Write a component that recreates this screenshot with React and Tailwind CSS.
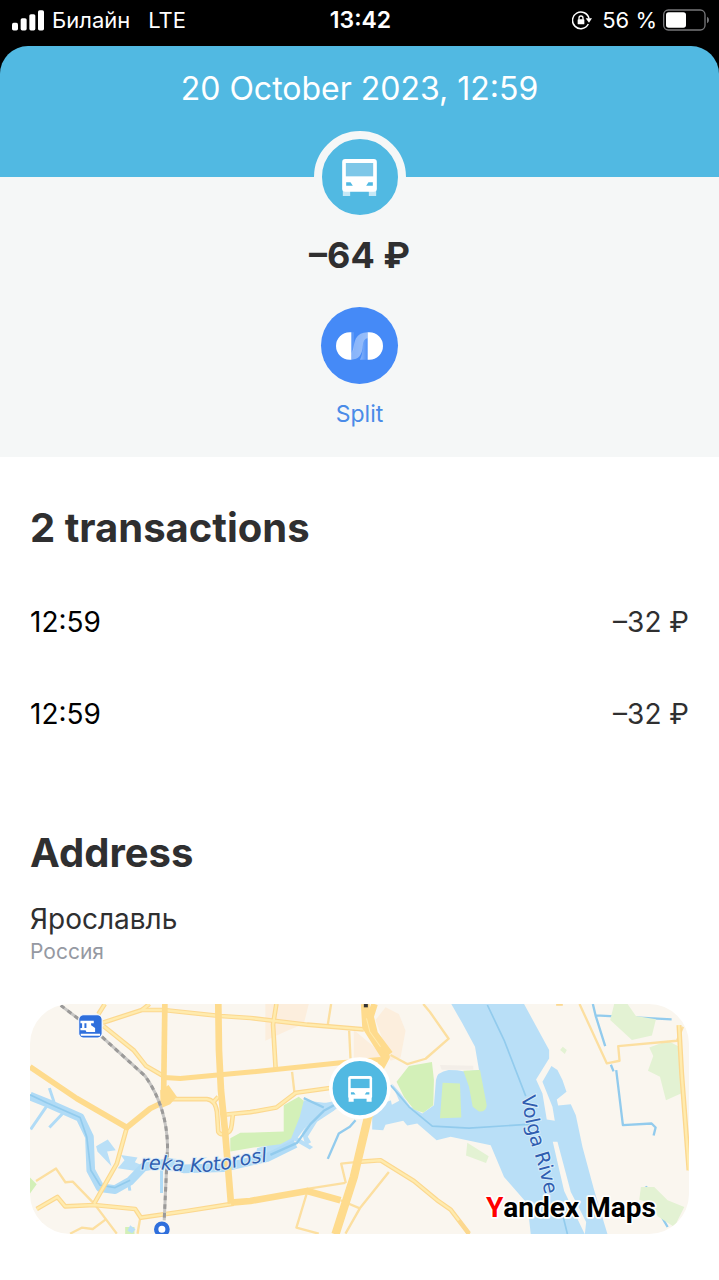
import React from 'react';

const TRANSACTIONS = [
  { id: 1, time: "12:59", amount: "–32 ₽" },
  { id: 2, time: "12:59", amount: "–32 ₽" }
];

function BusShape({ glass, lamps, wheels }) {
  return (
    <>
      <path d="M2 92h22v19H2zM80 92h22v19H80z" fill={wheels} />
      <rect width="104" height="98" rx="9" fill="#fff" />
      <rect x="11" y="12" width="82" height="40" fill={glass} />
      <path d="M12 70h13l7 10H12zM92 70H79l-7 10h20z" fill={lamps} />
    </>
  );
}

function StatusBar() {
  return (
    <div className="grid h-[46px] grid-cols-[1fr_auto_1fr] items-center bg-black pb-1.5 pl-3 pr-2.5 text-[22px] leading-7 text-white">
      <div className="flex items-center">
        <svg className="mr-2 h-[21px] w-8" viewBox="0 0 96 62" fill="#fff">
          <rect x="0" y="38" width="18" height="23" rx="5" />
          <rect x="26" y="24" width="18" height="37" rx="5" />
          <rect x="52" y="12" width="18" height="49" rx="5" />
          <rect x="78" y="0" width="18" height="61" rx="5" />
        </svg>
        <span>Билайн</span>
        <span className="ml-[18px]">LTE</span>
      </div>
      <span className="text-[23px] font-semibold">13:42</span>
      <div className="flex items-center justify-end">
        <svg className="mr-2.5 h-5 w-5" viewBox="0 0 60 60" fill="none">
          <path d="M49 42A25 25 0 1 1 51 26" stroke="#fff" strokeWidth="4.5" />
          <path d="M41 25h19l-9 13z" fill="#fff" />
          <rect x="17" y="28" width="20" height="15" rx="2" fill="#fff" />
          <path d="M21 29v-5a6 6 0 0 1 12 0v5" stroke="#fff" strokeWidth="4" />
        </svg>
        <span>56 %</span>
        <svg className="ml-1.5 h-[22px] w-[46px]" viewBox="0 0 138 66">
          <rect x="2" y="3" width="124" height="60" rx="14" fill="none" stroke="#77777a" strokeWidth="4" />
          <rect x="9" y="10" width="60" height="46" rx="8" fill="#fff" />
          <path d="M132 23q6 3 6 10t-6 10z" fill="#77777a" />
        </svg>
      </div>
    </div>
  );
}

function SplitLogo() {
  return (
    <svg className="h-7 w-[47px]" viewBox="0 0 141 82">
      <defs>
        <linearGradient id="fadeLeft" x1="0" x2="1">
          <stop offset="0" stopColor="#fff" stopOpacity="0.35" />
          <stop offset="1" stopColor="#fff" stopOpacity="0.45" />
        </linearGradient>
        <linearGradient id="fadeRight" x1="0" x2="1">
          <stop offset="0" stopColor="#fff" stopOpacity="0.35" />
          <stop offset="1" stopColor="#fff" stopOpacity="0.05" />
        </linearGradient>
      </defs>
      <path d="M46 0H41a41 41 0 0 0 0 82h5zM95 0h5a41 41 0 0 1 0 82h-5z" fill="#fff" />
      <path d="M46 0h8v52l-8 10z" fill="#fff" opacity="0.12" />
      <path d="M46 82V62C54 52 52 34 60 18Q70 0 95 0v18Q82 18 80 42 78 82 46 82z" fill="url(#fadeLeft)" />
      <path d="M80 42Q82 18 95 18v64H72Q80 66 80 42z" fill="url(#fadeRight)" />
    </svg>
  );
}

// minor streets, drawn as a casing with a lighter core
const STREETS = [
  "M248 98L365 60L430 60L600 78L690 84L860 104L1030 118",
  "M365 60L388 42",
  "M235 72L254 42",
  "M250 108L340 180L378 228L430 258",
  "M768 42L758 104L766 240",
  "M440 327L560 327Q585 330 590 365L594 425Q600 435 612 430",
  "M580 335L594 320",
  "M612 430Q632 430 634 405L638 372",
  "M618 373L690 366L768 352L826 308L940 292",
  "M320 412L290 520L222 640",
  "M50 656L112 620L135 648L222 644L345 656L362 682L500 662L640 640",
  "M1012 515L1080 510L1180 572L1250 630L1290 658L1345 730"
];

const LANES = [
  "M48 572L108 535L136 576L158 574L222 640L290 730",
  "M256 688L218 716L185 712L150 730",
  "M360 684L352 730",
  "M815 245L822 306",
  "M932 42L922 104M986 122L990 205",
  "M1208 42L1228 66L1284 146L1215 206L1160 222L1110 195",
  "M860 596L975 578M1012 515L962 520L976 578",
  "M860 606L828 712L895 730",
  "M960 630L1018 654L1105 545M1018 654L975 730",
  "M1676 42L1758 220L1796 212L1792 168L1968 152L1986 110"
];

const AVENUES = [
  { d: "M30 230L170 325L320 412L390 355L432 335", w: 17 },
  { d: "M434 42L430 335", w: 17 },
  { d: "M432 262L480 265L600 254L690 246L960 218L1080 208", w: 15 },
  { d: "M594 42L596 180L602 300L614 420L632 640", w: 20 },
  { d: "M632 637L690 632L860 602L960 630", w: 20 },
  { d: "M1045 370L1000 560L945 732", w: 25 },
  { d: "M1034 42L1038 110L1095 200L1062 262L1045 380", w: 26 },
  { d: "M1062 42L1050 80L1062 130L1108 192", w: 20 }
];

const RAILWAY = "M122 46L245 140L375 258Q440 350 442 470L432 690";

function MapPreview() {
  return (
    <svg
      className="block w-full rounded-[40px]"
      viewBox="30 42 1974 690"
      role="img"
      aria-label="Map of Yaroslavl"
      fill="none"
    >
      <rect x="30" y="42" width="1974" height="690" fill="#faf6ef" />

      {/* built-up areas */}
      <path d="M735 42h130l-15 60-50 20-65 30zM1065 90l30-38 40 20 20 50-15 80-30 10zM1000 120l60 50 30 40-90 5z" fill="#fceedd" />
      <path d="M1258 225l100 2v12h-95z" fill="#f3eee8" />

      {/* water */}
      <g fill="#b9dff7">
        <path d="M1292 42L1325 100L1363 170L1375 240L1332 244Q1310 240 1284 240Q1248 246 1246 270L1240 345L1205 370L1170 350L1140 310L1115 282L1112 330L1055 350L1055 418L1088 420L1095 404L1148 392L1160 406L1190 400L1248 450L1290 440L1410 465L1450 560L1520 640L1530 732H1760L1720 600L1685 470L1665 375L1650 342L1612 346L1608 328L1637 305L1625 270L1610 240L1592 228L1565 275L1595 350L1602 392L1578 388L1565 310L1546 268L1585 205L1585 180L1510 42z" />
        <path d="M228 468l35-20 24 32-26 4 13 44-42-44zM302 494l50 8-8 14 34 14-30 12-55-8 20-24zM850 330l60 8 60 0-30 24-60 16-48 64 46 28-10 8-46-26-76 44-40 6 4-28 70-20 38-40z" />
        <path d="M845 430L890 345L950 330L940 362L890 395L862 440L872 456L855 466z" />
      </g>
      <path d="M1100 285l14-3 22 50-22 12z" fill="#faf6ef" />
      <g stroke="#b0dbf6" strokeLinejoin="round">
        <path d="M30 318L80 338L180 382L208 440L212 540L240 592L285 598L330 572L370 530L450 516L490 536L610 532L740 502L825 460" strokeWidth="26" />
        <path d="M88 294l14 42M80 348L32 418M130 368L88 412M424 540v68M325 575l4 26" strokeWidth="9" />
      </g>
      <g stroke="#92cbed" strokeWidth="7" strokeLinejoin="round">
        <path d="M30 314L80 338L180 382L200 440L212 540L240 585L285 592L330 570" strokeWidth="5" />
        <path d="M750 494L830 458L870 402L910 362L950 340M850 324L910 352M1005 390L988 410L955 430L922 506" />
        <path d="M1110 285L1165 350L1235 408L1345 414L1530 402M1400 45L1450 150L1515 318M1620 650L1640 732" strokeWidth="5" />
        <path d="M1716 42L1724 76L1952 88M1724 76L1753 168M1770 224l8 20M1786 240L1806 405L1892 400L1904 412L1898 436M1875 588l14 36M1912 662l28 48" />
      </g>

      {/* islands, parks */}
      <path d="M1596 455h14l40 150 46 90-4 37-62-130z" fill="#faf6ef" />
      <g fill="#d3f0b8">
        <path d="M1128 275L1165 228L1234 216L1240 270L1238 345L1208 368L1180 358L1150 320zM1266 278L1318 280L1322 382L1258 384zM1328 242L1378 240L1398 345Q1396 366 1375 364L1356 350L1345 290z" />
        <path d="M630 444L660 428L790 424L790 345L835 320L850 332L838 380L812 445L780 462L700 472L630 484zM30 562l20 20-20 28zM315 710h28v22h-28z" />
      </g>
      <g fill="#e3f2d3">
        <path d="M1780 42h40l25 36 60 10-12 48-60 14-65-60zM1885 172l55-20 35 18 5 140-45 20-18-70-36-18 16-44zM1860 590l40 0 40 40 50 20-30 60-50-32-20-40-35-10zM1340 458l64 40-8 20-60-22zM1618 180l8-10 12 10-6 12z" />
      </g>
      <path d="M330 705l16 12-10 12-14-8z" fill="#b9dff7" />

      {/* roads */}
      <g strokeLinejoin="round">
        {LANES.map(d => <path key={d} d={d} stroke="#fcdfa0" strokeWidth="7" />)}
        {STREETS.map(d => <path key={d} d={d} stroke="#fcd88f" strokeWidth="14" />)}
        {STREETS.map(d => <path key={d} d={d} stroke="#ffebae" strokeWidth="7" />)}
        {AVENUES.map(road => <path key={road.d} d={road.d} stroke="#fedb8d" strokeWidth={road.w} />)}
        <path d="M420 300l25-15 25 35-20 22-28 12z" fill="#fedb8d" />
        <path d="M1974 105L1982 250L2004 540" stroke="#fcd88f" strokeWidth="15" />
        <path d="M1974 105L1982 250L2004 540" stroke="#ffebae" strokeWidth="7" />
        <path d="M1038 85l10 40 32 45" stroke="#ffebae" strokeWidth="3" />
        <path d="M1315 690l30 42M1606 42h20" stroke="#fcd88f" strokeWidth="10" />
      </g>

      {/* railway */}
      <path d={RAILWAY} stroke="#c6c5c3" strokeWidth="9" />
      <path d={RAILWAY} stroke="#9b9a99" strokeWidth="9" strokeDasharray="14 12" />
      <rect x="176" y="74" width="70" height="70" rx="14" fill="#2f6fdc" stroke="#fff" strokeWidth="3" />
      <path d="M181 92h40v8h-8v6l12 8v12h-26l-6-12h6v-14h-6v14h5v7h-17v-7h5v-14h-5zM182 131h58v6h-58z" fill="#fff" />
      <circle cx="425" cy="717" r="17" fill="#fff" stroke="#2f6fdc" strokeWidth="13" />

      {/* labels */}
      <path id="kotorosl" d="M362 538Q430 536 490 544Q570 550 650 530Q710 516 790 508" />
      <path id="volga" d="M1502 318Q1516 420 1544 500Q1570 580 1584 690" />
      <g
        fill="#2f5eb0"
        stroke="#d6ebf9"
        strokeWidth="6"
        fontFamily='"DejaVu Sans", sans-serif'
        fontSize="58"
        style={{ paintOrder: "stroke" }}
      >
        <text fontStyle="italic"><textPath href="#kotorosl">reka Kotorosl</textPath></text>
        <text><textPath href="#volga">Volga Rive</textPath></text>
      </g>
      <rect x="1030" y="40" width="12" height="12" fill="#333" />

      {/* place marker */}
      <circle cx="1018" cy="294" r="87" fill="#51b9e2" stroke="#fff" strokeWidth="11" />
      <g transform="translate(983 258) scale(0.69)">
        <BusShape glass="#51b9e2" lamps="#51b9e2" wheels="#fff" />
      </g>

      <text
        x="1396"
        y="680"
        fill="#000"
        stroke="#fff"
        strokeWidth="10"
        strokeLinejoin="round"
        fontFamily="Roboto, sans-serif"
        fontWeight="700"
        fontSize="84"
        style={{ paintOrder: "stroke" }}
      >
        <tspan fill="#f00">Y</tspan>andex Maps
      </text>
    </svg>
  );
}

function App() {
  return (
    <div className="min-h-screen bg-white font-['Inter','Liberation_Sans',sans-serif] text-[#2f2f30]">
      <StatusBar />
      <div className="bg-black">
        <header className="h-[131px] rounded-t-[28px] bg-[#51b9e2] pt-[25px] text-center">
          <h1 className="text-[32px] leading-9 text-white">20 October 2023, 12:59</h1>
        </header>
      </div>

      <section className="flex flex-col items-center bg-[#f5f7f7] pb-[29px]">
        <div className="-mt-[46px] flex h-[92px] w-[92px] items-center justify-center rounded-full border-8 border-[#f5f7f7] bg-[#51b9e2]">
          <svg className="h-[37px] w-[35px]" viewBox="0 0 104 111">
            <BusShape glass="#7dc7e8" lamps="#51b9e2" wheels="#c5e8f6" />
          </svg>
        </div>
        <p className="mt-3 text-[36px] font-bold leading-10">–64 ₽</p>
        <button type="button" className="mt-8 flex flex-col items-center gap-4 text-[23px] leading-7 text-[#4a8be8]">
          <span className="flex h-[77px] w-[77px] items-center justify-center rounded-full bg-[#458af7]">
            <SplitLogo />
          </span>
          Split
        </button>
      </section>

      <main className="px-[30px] pb-[46px]">
        <h2 className="pt-[47px] text-[40px] font-bold leading-[48px]">2 transactions</h2>
        <ul className="mt-6 text-[28px]">
          {TRANSACTIONS.map(item => (
            <li key={item.id} className="flex h-[92px] items-center justify-between">
              <span className="text-black">{item.time}</span>
              <span>{item.amount}</span>
            </li>
          ))}
        </ul>

        <h2 className="mt-[69px] text-[40px] font-bold leading-[48px]">Address</h2>
        <p className="mt-6 text-[28px] leading-9">Ярославль</p>
        <p className="mb-[37px] text-[21px] leading-[30px] text-[#9599a2]">Россия</p>
        <MapPreview />
      </main>
    </div>
  );
}

export default App;
